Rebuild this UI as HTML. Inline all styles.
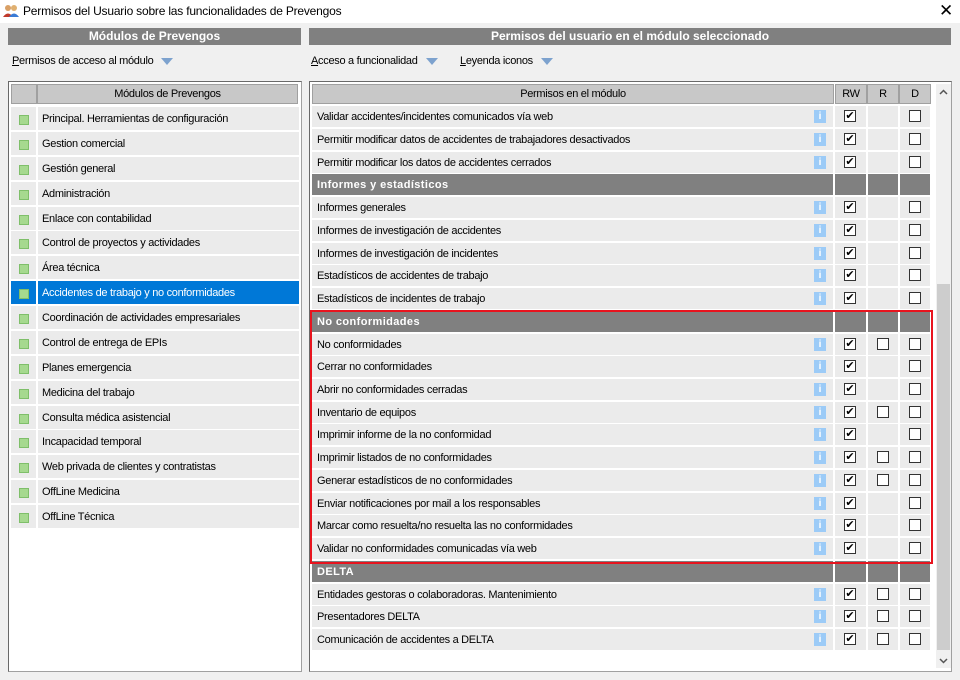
<!DOCTYPE html>
<html><head><meta charset="utf-8"><style>
*{margin:0;padding:0;box-sizing:border-box}
body{width:960px;height:680px;background:#f0f0f0;font-family:"Liberation Sans",sans-serif;font-size:11px;letter-spacing:-0.3px;color:#000;position:relative;overflow:hidden}
.a{position:absolute}
.title{left:0;top:0;width:960px;height:23px;background:#fff}
.hdr{background:#808080;color:#fff;font-weight:bold;text-align:center;line-height:17px;height:17px;font-size:12px;letter-spacing:0}
.box{background:#fff;border:1px solid #a0a0a0;border-left-color:#696969;border-top-color:#696969}
.ch{background:#c8c8c8;border:1px solid #a0a0a0;text-align:center;line-height:18px;height:20px}
.lr{height:23px}
.lr .i{position:absolute;left:0;width:25px;height:23px;background:#ebebeb}
.lr .i:after{content:"";position:absolute;left:8px;top:8px;width:8px;height:8px;background:#a6d98f;border:1px solid #7fbf6a}
.lr .t{position:absolute;left:27px;width:261px;height:23px;background:#ebebeb;line-height:24px;padding-left:4px}
.lr.sel .i,.lr.sel .t{background:#0078d7;color:#fff}
.rr{height:21px;left:0;width:640px}
.rr div{position:absolute;top:0;height:21px;background:#ebebeb}
.rr .t{left:3px;width:521px;line-height:22px;padding-left:5px}
.rr .c1{left:526px;width:31px}.rr .c2{left:559px;width:30px}.rr .c3{left:591px;width:30px}
.rr.g div{background:#808080;color:#fff;font-weight:bold;font-size:11px;letter-spacing:0.4px}
.info{position:absolute!important;left:502px!important;top:4px!important;width:12px!important;height:13px!important;background:#9ccbf7!important;color:#fff;font-size:10px;font-weight:bold;text-align:center;line-height:13px;letter-spacing:0}
.cb{position:absolute!important;left:9px!important;top:4px!important;width:12px!important;height:12px!important;background:#fff!important;border:1px solid #333;font-size:11px;line-height:10px;text-align:center;color:#000;letter-spacing:0}
.dd{display:inline-block;width:0;height:0;border-left:6px solid transparent;border-right:6px solid transparent;border-top:7px solid #7da2ce;margin-left:8px;vertical-align:middle}
</style></head><body>
<div class="a title"></div>
<div class="a" style="left:3px;top:4px;width:16px;height:14px">
<svg width="16" height="14"><circle cx="5" cy="4" r="3" fill="#d9a066"/><path d="M0 13 Q5 6 10 13Z" fill="#c0392b"/><circle cx="11" cy="4" r="3" fill="#e0b070"/><path d="M6 13 Q11 6 16 13Z" fill="#3a7bd5"/></svg></div>
<div class="a" style="left:23px;top:4px;font-size:12px;letter-spacing:-0.2px">Permisos del Usuario sobre las funcionalidades de Prevengos</div>
<div class="a" style="left:939px;top:1px;font-size:17px">✕</div>

<div class="a hdr" style="left:8px;top:28px;width:293px">Módulos de Prevengos</div>
<div class="a hdr" style="left:309px;top:28px;width:642px">Permisos del usuario en el módulo seleccionado</div>
<div class="a" style="left:12px;top:55px"><u>P</u>ermisos de acceso al módulo<span class="dd"></span></div>
<div class="a" style="left:311px;top:55px"><u>A</u>cceso a funcionalidad<span class="dd"></span></div>
<div class="a" style="left:460px;top:55px"><u>L</u>eyenda iconos<span class="dd"></span></div>

<div class="a box" style="left:8px;top:81px;width:294px;height:591px"></div>
<div class="a ch" style="left:11px;top:84px;width:26px"></div>
<div class="a ch" style="left:37px;top:84px;width:261px">Módulos de Prevengos</div>
<div class="a" style="left:11px;top:0">
<div class="a lr" style="top:107px"><div class="i"></div><div class="t">Principal. Herramientas de configuración</div></div>
<div class="a lr" style="top:132px"><div class="i"></div><div class="t">Gestion comercial</div></div>
<div class="a lr" style="top:157px"><div class="i"></div><div class="t">Gestión general</div></div>
<div class="a lr" style="top:182px"><div class="i"></div><div class="t">Administración</div></div>
<div class="a lr" style="top:207px"><div class="i"></div><div class="t">Enlace con contabilidad</div></div>
<div class="a lr" style="top:231px"><div class="i"></div><div class="t">Control de proyectos y actividades</div></div>
<div class="a lr" style="top:256px"><div class="i"></div><div class="t">Área técnica</div></div>
<div class="a lr sel" style="top:281px"><div class="i"></div><div class="t">Accidentes de trabajo y no conformidades</div></div>
<div class="a lr" style="top:306px"><div class="i"></div><div class="t">Coordinación de actividades empresariales</div></div>
<div class="a lr" style="top:331px"><div class="i"></div><div class="t">Control de entrega de EPIs</div></div>
<div class="a lr" style="top:356px"><div class="i"></div><div class="t">Planes emergencia</div></div>
<div class="a lr" style="top:381px"><div class="i"></div><div class="t">Medicina del trabajo</div></div>
<div class="a lr" style="top:406px"><div class="i"></div><div class="t">Consulta médica asistencial</div></div>
<div class="a lr" style="top:430px"><div class="i"></div><div class="t">Incapacidad temporal</div></div>
<div class="a lr" style="top:455px"><div class="i"></div><div class="t">Web privada de clientes y contratistas</div></div>
<div class="a lr" style="top:480px"><div class="i"></div><div class="t">OffLine  Medicina</div></div>
<div class="a lr" style="top:505px"><div class="i"></div><div class="t">OffLine Técnica</div></div>
</div>

<div class="a box" style="left:309px;top:81px;width:643px;height:591px"></div>
<div class="a ch" style="left:312px;top:84px;width:522px">Permisos en el módulo</div>
<div class="a ch" style="left:835px;top:84px;width:32px">RW</div>
<div class="a ch" style="left:867px;top:84px;width:32px">R</div>
<div class="a ch" style="left:899px;top:84px;width:32px">D</div>
<div class="a" style="left:936px;top:84px;width:15px;height:584px;background:#f0f0f0"></div>
<div class="a" style="left:937px;top:284px;width:13px;height:366px;background:#cdcdcd"></div>
<svg class="a" style="left:938px;top:88px" width="11" height="8"><path d="M2 6 L5.5 2.5 L9 6" stroke="#555" stroke-width="1.5" fill="none"/></svg>
<svg class="a" style="left:938px;top:657px" width="11" height="8"><path d="M2 2 L5.5 5.5 L9 2" stroke="#555" stroke-width="1.5" fill="none"/></svg>

<div class="a" style="left:309px;top:0">
<div class="a rr" style="top:106px"><div class="t">Validar accidentes/incidentes comunicados vía web<span class="info">i</span></div><div class="c1"><span class="cb">✔</span></div><div class="c2"></div><div class="c3"><span class="cb"></span></div></div>
<div class="a rr" style="top:129px"><div class="t">Permitir modificar datos de accidentes de trabajadores desactivados<span class="info">i</span></div><div class="c1"><span class="cb">✔</span></div><div class="c2"></div><div class="c3"><span class="cb"></span></div></div>
<div class="a rr" style="top:152px"><div class="t">Permitir modificar los datos de accidentes cerrados<span class="info">i</span></div><div class="c1"><span class="cb">✔</span></div><div class="c2"></div><div class="c3"><span class="cb"></span></div></div>
<div class="a rr g" style="top:174px"><div class="t">Informes y estadísticos</div><div class="c1"></div><div class="c2"></div><div class="c3"></div></div>
<div class="a rr" style="top:197px"><div class="t">Informes generales<span class="info">i</span></div><div class="c1"><span class="cb">✔</span></div><div class="c2"></div><div class="c3"><span class="cb"></span></div></div>
<div class="a rr" style="top:220px"><div class="t">Informes de investigación de accidentes<span class="info">i</span></div><div class="c1"><span class="cb">✔</span></div><div class="c2"></div><div class="c3"><span class="cb"></span></div></div>
<div class="a rr" style="top:243px"><div class="t">Informes de investigación de incidentes<span class="info">i</span></div><div class="c1"><span class="cb">✔</span></div><div class="c2"></div><div class="c3"><span class="cb"></span></div></div>
<div class="a rr" style="top:265px"><div class="t">Estadísticos de accidentes de trabajo<span class="info">i</span></div><div class="c1"><span class="cb">✔</span></div><div class="c2"></div><div class="c3"><span class="cb"></span></div></div>
<div class="a rr" style="top:288px"><div class="t">Estadísticos de incidentes de trabajo<span class="info">i</span></div><div class="c1"><span class="cb">✔</span></div><div class="c2"></div><div class="c3"><span class="cb"></span></div></div>
<div class="a rr g" style="top:311px"><div class="t">No conformidades</div><div class="c1"></div><div class="c2"></div><div class="c3"></div></div>
<div class="a rr" style="top:334px"><div class="t">No conformidades<span class="info">i</span></div><div class="c1"><span class="cb">✔</span></div><div class="c2"><span class="cb"></span></div><div class="c3"><span class="cb"></span></div></div>
<div class="a rr" style="top:356px"><div class="t">Cerrar no conformidades<span class="info">i</span></div><div class="c1"><span class="cb">✔</span></div><div class="c2"></div><div class="c3"><span class="cb"></span></div></div>
<div class="a rr" style="top:379px"><div class="t">Abrir no conformidades cerradas<span class="info">i</span></div><div class="c1"><span class="cb">✔</span></div><div class="c2"></div><div class="c3"><span class="cb"></span></div></div>
<div class="a rr" style="top:402px"><div class="t">Inventario de equipos<span class="info">i</span></div><div class="c1"><span class="cb">✔</span></div><div class="c2"><span class="cb"></span></div><div class="c3"><span class="cb"></span></div></div>
<div class="a rr" style="top:424px"><div class="t">Imprimir informe de la no conformidad<span class="info">i</span></div><div class="c1"><span class="cb">✔</span></div><div class="c2"></div><div class="c3"><span class="cb"></span></div></div>
<div class="a rr" style="top:447px"><div class="t">Imprimir listados de no conformidades<span class="info">i</span></div><div class="c1"><span class="cb">✔</span></div><div class="c2"><span class="cb"></span></div><div class="c3"><span class="cb"></span></div></div>
<div class="a rr" style="top:470px"><div class="t">Generar estadísticos de no conformidades<span class="info">i</span></div><div class="c1"><span class="cb">✔</span></div><div class="c2"><span class="cb"></span></div><div class="c3"><span class="cb"></span></div></div>
<div class="a rr" style="top:493px"><div class="t">Enviar notificaciones por mail a los responsables<span class="info">i</span></div><div class="c1"><span class="cb">✔</span></div><div class="c2"></div><div class="c3"><span class="cb"></span></div></div>
<div class="a rr" style="top:515px"><div class="t">Marcar como resuelta/no resuelta las no conformidades<span class="info">i</span></div><div class="c1"><span class="cb">✔</span></div><div class="c2"></div><div class="c3"><span class="cb"></span></div></div>
<div class="a rr" style="top:538px"><div class="t">Validar no conformidades comunicadas vía web<span class="info">i</span></div><div class="c1"><span class="cb">✔</span></div><div class="c2"></div><div class="c3"><span class="cb"></span></div></div>
<div class="a rr g" style="top:561px"><div class="t">DELTA</div><div class="c1"></div><div class="c2"></div><div class="c3"></div></div>
<div class="a rr" style="top:584px"><div class="t">Entidades gestoras o colaboradoras. Mantenimiento<span class="info">i</span></div><div class="c1"><span class="cb">✔</span></div><div class="c2"><span class="cb"></span></div><div class="c3"><span class="cb"></span></div></div>
<div class="a rr" style="top:606px"><div class="t">Presentadores DELTA<span class="info">i</span></div><div class="c1"><span class="cb">✔</span></div><div class="c2"><span class="cb"></span></div><div class="c3"><span class="cb"></span></div></div>
<div class="a rr" style="top:629px"><div class="t">Comunicación de accidentes a DELTA<span class="info">i</span></div><div class="c1"><span class="cb">✔</span></div><div class="c2"><span class="cb"></span></div><div class="c3"><span class="cb"></span></div></div>
</div>
<div class="a" style="left:310px;top:310px;width:623px;height:254px;border:2px solid #e8141e"></div>
</body></html>
